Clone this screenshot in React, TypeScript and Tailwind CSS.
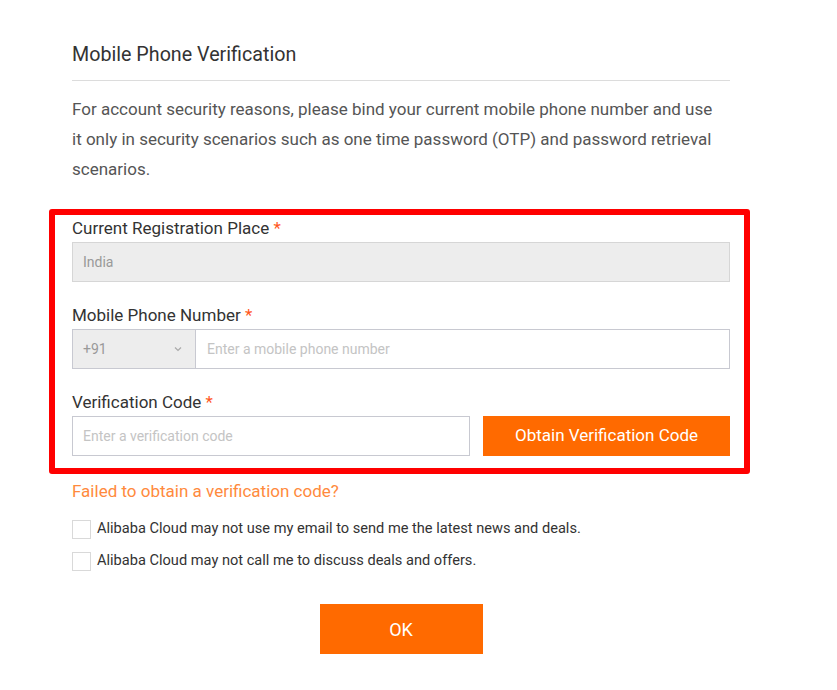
import React, { useState } from 'react';

const Label = ({ text }: { text: string }) => (
  <div className="text-[17px] leading-[24px] text-[#333] mb-[2px]">
    {text} <span className="text-[#ff5722]">*</span>
  </div>
);

const Check = ({ text }: { text: string }) => {
  const [on, setOn] = useState(false);
  return (
    <label className="flex items-center h-[24px] cursor-pointer">
      <span
        onClick={() => setOn(!on)}
        className={`w-[19px] h-[19px] border border-[#d9d9d9] bg-white mr-[6px] ${on ? 'bg-[#ff6a00]' : ''}`}
      />
      <span className="text-[14.6px] text-[#333]">{text}</span>
    </label>
  );
};

const App = () => {
  const [phone, setPhone] = useState('');
  const [code, setCode] = useState('');

  return (
    <div className="w-[837px] h-[690px] bg-white font-['Roboto',sans-serif]">
      <div className="ml-[72px] w-[658px] pt-[41px]">
        <h2 className="text-[19.7px] leading-[28px] text-[#333] pb-[11px] border-b border-[#dcdcdc]">
          Mobile Phone Verification
        </h2>
        <p className="mt-[13px] w-[648px] text-[17px] leading-[30px] text-[#555]">
          For account security reasons, please bind your current mobile phone number and use it only in
          security scenarios such as one time password (OTP) and password retrieval scenarios.
        </p>

        <div className="relative mt-[32px]">
          <Label text="Current Registration Place" />
          <div className="h-[40px] border border-[#d6d6d6] bg-[#ededed] flex items-center px-[10px] text-[14px] text-[#999]">
            India
          </div>

          <div className="mt-[21px]">
            <Label text="Mobile Phone Number" />
            <div className="flex h-[40px] mt-[1px]">
              <div className="w-[123px] border border-r-0 border-[#c8c9d1] bg-[#ededed] flex items-center justify-between pl-[10px] pr-[12px] text-[14px] text-[#999]">
                <span>+91</span>
                <svg width="10" height="10" viewBox="0 0 10 10" fill="none" stroke="#aaa" strokeWidth="1.2">
                  <path d="M2 3.5 L5 6.5 L8 3.5" />
                </svg>
              </div>
              <input
                value={phone}
                onChange={(e) => setPhone(e.target.value)}
                placeholder="Enter a mobile phone number"
                className="flex-1 border border-[#c8c9d1] px-[11px] text-[14px] text-[#333] outline-none placeholder:text-[#c4c4c4]"
              />
            </div>
          </div>

          <div className="mt-[21px]">
            <Label text="Verification Code" />
            <div className="flex h-[40px] gap-[13px]">
              <input
                value={code}
                onChange={(e) => setCode(e.target.value)}
                placeholder="Enter a verification code"
                className="w-[398px] border border-[#c8c9d1] px-[10px] text-[14px] text-[#333] outline-none placeholder:text-[#c4c4c4]"
              />
              <button className="flex-1 bg-[#ff6a00] text-white text-[17px]">Obtain Verification Code</button>
            </div>
          </div>

          <div className="absolute -top-[7px] -left-[23px] -right-[20px] -bottom-[18px] border-[6px] border-[#ff0000] rounded-[3px] pointer-events-none" />
        </div>

        <div className="mt-[23px] text-[17px] leading-[24px] text-[#ff8a3d] cursor-pointer">
          Failed to obtain a verification code?
        </div>

        <div className="mt-[14px] flex flex-col gap-[8px]">
          <Check text="Alibaba Cloud may not use my email to send me the latest news and deals." />
          <Check text="Alibaba Cloud may not call me to discuss deals and offers." />
        </div>

        <div className="flex justify-center mt-[31px]">
          <button className="w-[163px] h-[50px] bg-[#ff6a00] text-white text-[18px]">OK</button>
        </div>
      </div>
    </div>
  );
};

export default App;
